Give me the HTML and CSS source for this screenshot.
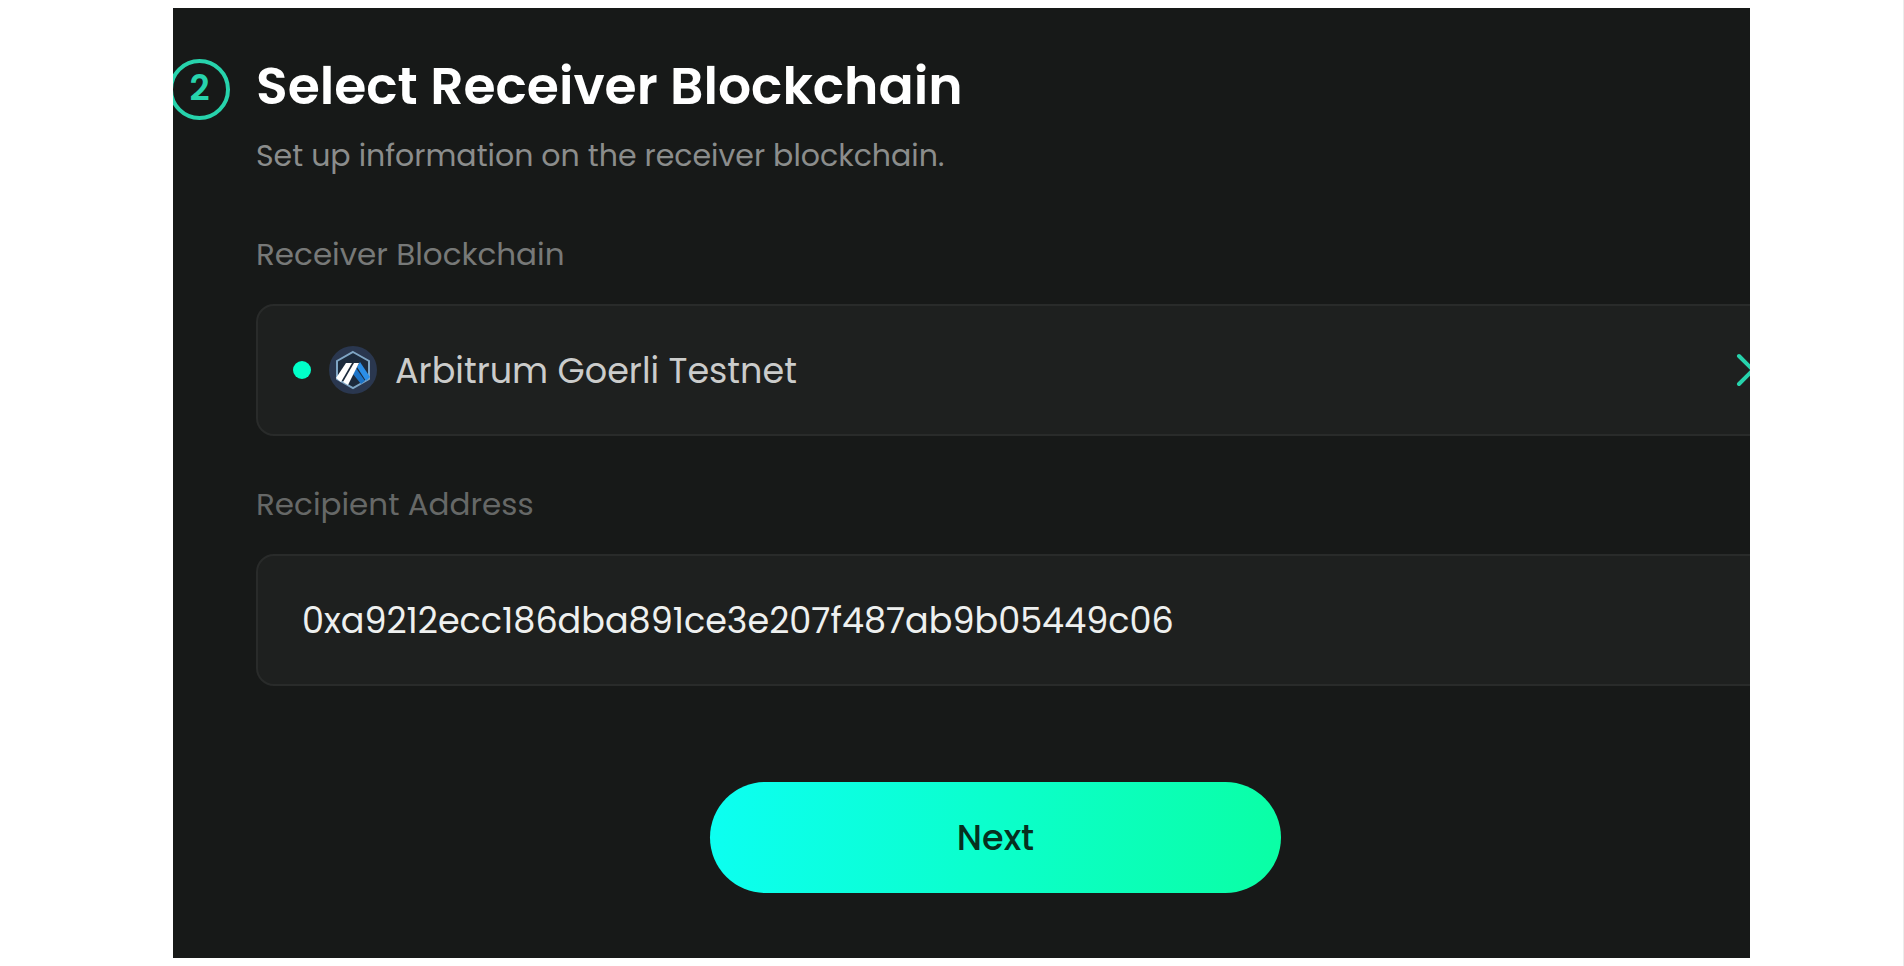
FILE: index.html
```html
<!DOCTYPE html>
<html lang="en">
<head>
<meta charset="utf-8">
<title>Select Receiver Blockchain</title>
<link rel="stylesheet" href="styles.css">
</head>
<body>
<main class="panel">
  <form class="step">
    <span class="step-number">2</span>
    <div class="step-body">
      <h1 class="title">Select Receiver Blockchain</h1>
      <p class="subtitle">Set up information on the receiver blockchain.</p>

      <label class="label" for="chain">Receiver Blockchain</label>
      <button class="field chain" id="chain" type="button">
        <span class="status"></span>
        <svg class="chain-logo" viewBox="0 0 48 48" aria-hidden="true">
          <circle cx="24" cy="24" r="24" fill="#2a374f"/>
          <path d="M24 6 40 15v18L24 42 8 33V15z" fill="#1c2a3c" stroke="#7fa5c4" stroke-width="2"/>
          <path d="M28 21l3-5 10 15-4 4z" fill="#2b8fe8"/>
          <path d="M24 28l3-6 9 13-4 3z" fill="#1c74c8"/>
          <path d="M17 17h6L12 36l-5-4z" fill="#fff"/>
          <path d="M25 17h5L19 39l-5-3z" fill="#fff"/>
        </svg>
        <span class="chain-name">Arbitrum Goerli Testnet</span>
        <svg class="chevron" viewBox="0 0 20 36" aria-hidden="true">
          <path d="M3 4l14 14L3 32" fill="none" stroke="#27d3ac" stroke-width="4" stroke-linecap="round"/>
        </svg>
      </button>

      <label class="label label-dim" for="address">Recipient Address</label>
      <input class="field address" id="address" type="text" value="0xa9212ecc186dba891ce3e207f487ab9b05449c06">
    </div>
    <button class="next" type="submit">Next</button>
  </form>
</main>
</body>
</html>
```
FILE: styles.css
```css
* {
  box-sizing: border-box;
}

body {
  margin: 0;
  min-height: 100vh;
  padding: 8px 153px 8px 173px;
  border-right: 1px solid #ececec;
  background: #fff;
  font-family: Poppins, Inter, sans-serif;
}

.panel {
  overflow: hidden;
  background: #171918;
}

/* The form runs wider than the panel, which clips both edges. */
.step {
  display: grid;
  grid-template-columns: 61px 1fr;
  column-gap: 26px;
  margin: 0 -72px 0 -4px;
  padding: 46px 0 65px;
}

.step-number {
  display: flex;
  align-items: center;
  justify-content: center;
  height: 61px;
  margin-top: 5px;
  padding-bottom: 4px;
  border: 4px solid #27d3ac;
  border-radius: 50%;
  color: #27d3ac;
  font-size: 35px;
  font-weight: 600;
  line-height: 40px;
}

.step-body {
  display: flex;
  flex-direction: column;
}

.title {
  margin: 0;
  color: #fff;
  font-size: 52px;
  font-weight: 600;
  line-height: 64px;
}

.subtitle {
  margin: 18px 0 10px;
  color: #8b8d8c;
  font-size: 30px;
  line-height: 40px;
}

.label {
  margin: 48px 0 30px;
  color: #777978;
  font-size: 31px;
  line-height: 40px;
}

.label-dim {
  color: #666867;
}

.field {
  width: 100%;
  height: 132px;
  border: 2px solid #292b2a;
  border-radius: 18px;
  background: #1e201f;
  font-family: inherit;
  font-size: 35px;
}

.chain {
  display: flex;
  align-items: center;
  padding: 0 64px 0 35px;
  color: #cbcccb;
  text-align: left;
}

.status {
  width: 18px;
  height: 18px;
  border-radius: 50%;
  background: #00ffc8;
}

.chain-logo {
  width: 48px;
  height: 48px;
  margin: 0 18px;
}

.chevron {
  width: 20px;
  height: 36px;
  margin-left: auto;
}

.address {
  padding: 0 44px;
  color: #eef0ef;
}

.next {
  grid-column: 1 / -1;
  justify-self: center;
  width: 571px;
  height: 111px;
  margin-top: 96px;
  border: 0;
  border-radius: 56px;
  background: linear-gradient(100deg, #0cfff2, #0affa4);
  color: #06301f;
  font-family: inherit;
  font-size: 35px;
  font-weight: 500;
}
```
